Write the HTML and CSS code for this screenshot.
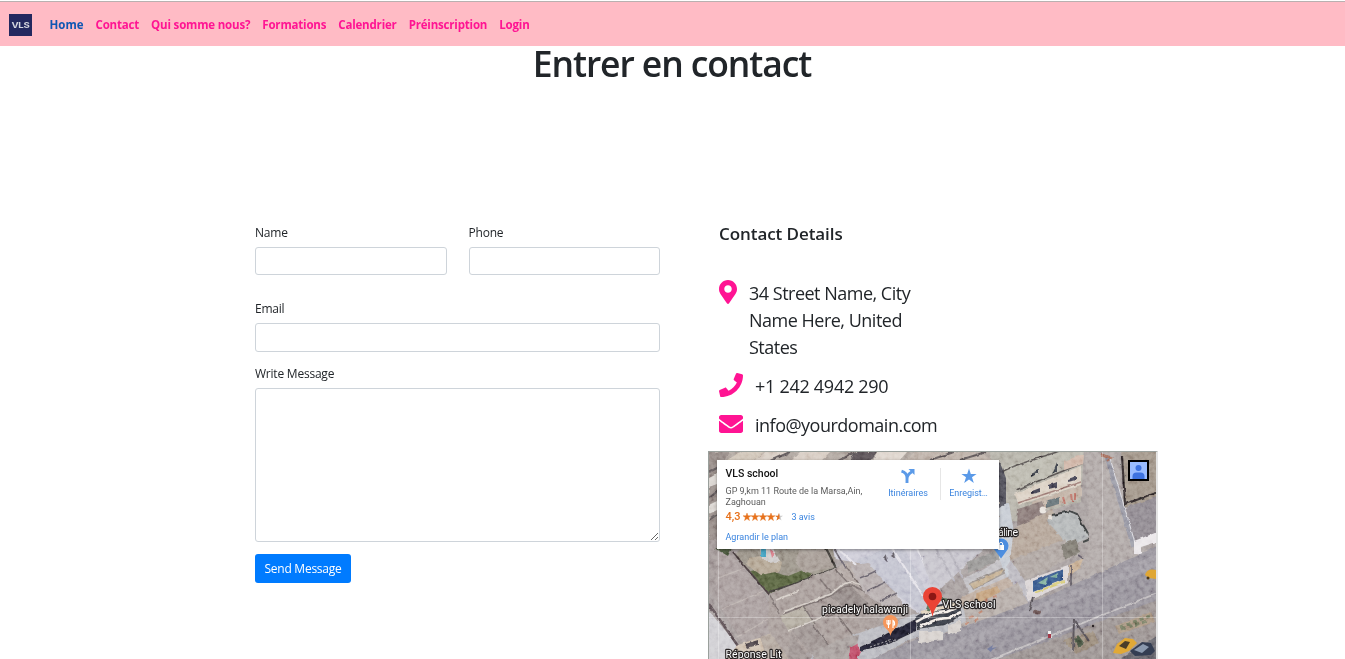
FILE: index.html
```html
<!DOCTYPE html>
<html lang="fr">
<head>
<meta charset="utf-8">
<title>Entrer en contact</title>
<link rel="stylesheet" href="styles.css">
</head>
<body>
<nav class="navbar">
  <a class="brand" href="#"><span class="brand-text">VLS</span></a>
  <a class="nav-link active" href="#">Home</a>
  <a class="nav-link" href="#">Contact</a>
  <a class="nav-link" href="#">Qui somme nous?</a>
  <a class="nav-link" href="#">Formations</a>
  <a class="nav-link" href="#">Calendrier</a>
  <a class="nav-link" href="#">Préinscription</a>
  <a class="nav-link" href="#">Login</a>
</nav>
<h1 class="title"><span>Entrer en contact</span></h1>
<main class="columns">
  <form class="form">
    <div class="row">
      <div class="field"><label for="name">Name</label><input id="name" type="text"></div>
      <div class="field"><label for="phone">Phone</label><input id="phone" type="text"></div>
    </div>
    <div class="field email"><label for="email">Email</label><input id="email" type="text"></div>
    <div class="field message"><label for="message">Write Message</label><textarea id="message"></textarea></div>
    <button class="send" type="button"><span>Send Message</span></button>
  </form>
  <section class="details">
    <h2 class="details-title"><span>Contact Details</span></h2>
    <div class="item address">
      <svg class="icon-pin" viewBox="0 0 384 512"><path d="M172.268 501.67C26.97 291.031 0 269.413 0 192 0 85.961 85.961 0 192 0s192 85.961 192 192c0 77.413-26.97 99.031-172.268 309.67-9.535 13.774-29.93 13.773-39.464 0zM192 272c44.183 0 80-35.817 80-80s-35.817-80-80-80-80 35.817-80 80 35.817 80 80 80z"/></svg>
      <p class="item-text"><span>34 Street Name, City</span><br><span>Name Here, United</span><br><span>States</span></p>
    </div>
    <div class="item phone">
      <svg class="icon" viewBox="0 0 512 512"><path d="M493.4 24.6l-104-24c-11.3-2.6-22.9 3.3-27.5 13.9l-48 112c-4.2 9.8-1.4 21.3 6.9 28l60.6 49.6c-36 76.7-98.9 140.5-177.2 177.2l-49.6-60.6c-6.8-8.3-18.2-11.1-28-6.9l-112 48C3.9 366.5-2 378.1.6 389.4l24 104C27.100 504.200 36.700 512 48 512c256.100 0 464-207.500 464-464 0-11.200-7.700-20.900-18.600-23.400z"/></svg>
      <p class="item-text"><span>+1 242 4942 290</span></p>
    </div>
    <div class="item mail">
      <svg class="icon" viewBox="0 0 512 512"><path d="M502.300 190.800c3.900-3.100 9.700-.2 9.700 4.700V400c0 26.500-21.500 48-48 48H48c-26.500 0-48-21.500-48-48V195.600c0-5 5.700-7.800 9.700-4.700 22.400 17.400 52.100 39.500 154.100 113.600 21.100 15.400 56.700 47.800 92.200 47.600 35.700.3 72-32.800 92.300-47.600 102-74.100 131.600-96.300 154-113.700zM256 320c23.200.4 56.600-29.200 73.400-41.400 132.700-96.300 142.800-104.700 173.400-128.700 5.800-4.500 9.200-11.500 9.200-18.900v-19c0-26.500-21.500-48-48-48H48c-26.500 0-48 21.500-48 48v19c0 7.400 3.400 14.300 9.200 18.900 30.600 23.900 40.700 32.400 173.400 128.700 16.800 12.200 50.200 41.800 73.400 41.400z"/></svg>
      <p class="item-text"><span>info@yourdomain.com</span></p>
    </div>
    <div class="map">
      <svg class="aerial" viewBox="709 452 447 207" width="447" height="207">
        <defs>
          <filter id="grain" x="0" y="0" width="100%" height="100%">
            <feTurbulence type="fractalNoise" baseFrequency="0.2" numOctaves="5" seed="7"/>
            <feColorMatrix values="0.7 0.3 0 0 0  0.7 0.3 0 0 0  0.7 0.3 0 0 0  0 0 0 0 1"/>
            <feComponentTransfer><feFuncR type="linear" slope="2.2" intercept="-0.38"/><feFuncG type="linear" slope="2.2" intercept="-0.4"/><feFuncB type="linear" slope="2.2" intercept="-0.36"/></feComponentTransfer>
          </filter>
          <filter id="rough" x="-5%" y="-5%" width="110%" height="110%">
            <feTurbulence type="fractalNoise" baseFrequency="0.15" numOctaves="2" seed="3" result="n"/>
            <feDisplacementMap in="SourceGraphic" in2="n" scale="3" xChannelSelector="R" yChannelSelector="G"/>
            <feGaussianBlur stdDeviation="0.45"/>
          </filter>
        </defs>
        <rect x="709" y="452" width="447" height="207" fill="#9b9391"/>
        <g filter="url(#rough)">
          <!-- northern rooftops -->
          <path d="M705 448H1000V548H705z" fill="#a59b92"/>
          <path d="M709 452h20l-8 14-4 94h-8z" fill="#877b76"/>
          <path d="M722 463l22-13h24l-20 14z" fill="#c8bcac"/><path d="M752 462l15-11h22l-17 12zM800 452h30l-8 8h-30z" fill="#d0c4b8"/>
          <path d="M855 452h22l-7 9h-20z" fill="#443d40"/><path d="M877 452h30l-8 9h-26z" fill="#d9cfc5"/>
          <path d="M905 460l10-8h60l20 9z" fill="#b4a79c"/>
          <path d="M709 472l12-6M709 498l10-8M709 520l9-6M770 461l20-9M838 461l18-9M930 460l24-8M960 460l26-8" stroke="#4c4444" stroke-width="2"/>
          <path d="M709 478l8-4v10l-8 3zM709 505l8-4v9l-8 4z" fill="#d5d0ca"/>
          <!-- western roofs -->
          <path d="M705 540h26l56 93-40 17-42-66z" fill="#958b89"/>
          <path d="M717 550l18 8 55 73-45 15-28-47z" fill="#9d9290"/>
          <path d="M705 606l33 40-9 16h-24z" fill="#c8c7cb"/>
          <path d="M709 604l29 42" stroke="#493d40" stroke-width="2.500" fill="none"/>
          <path d="M738 645l49-17 15 34h-80z" fill="#c9b9a6"/>
          <path d="M760 637l28-8 14 33h-34z" fill="#a89c91"/>
          <path d="M745 644l13-4v5l-11 3z" fill="#3d3639"/>
          <path d="M718 578l32-12M722 609l46-20M737 637l35-20" stroke="#b0a6a1" stroke-width="1.300"/>
          <!-- garden -->
          <path d="M741 548h92l2 20-66 25-20-23-14-15z" fill="#8c8578"/>
          <path d="M750 571l13-2 25 7 15-6 9 4-9 8-35 12z" fill="#46532f"/>
          <path d="M714 548h18l-4 8z" fill="#334026"/>
          <path d="M748 558l21-3 13 7-2 9-19 4-14-10z" fill="#a89a85"/>
          <path d="M800 549h25l9 18-30 6-9-11z" fill="#9a9087"/>
          <path d="M760 549h13l7 12-10 2-8-5z" fill="#c6c3c1"/><path d="M761 549h5v8h-5z" fill="#2d91b3"/><path d="M770 550l5 4-3 4z" fill="#ce6570"/>
          <path d="M733 552l14 17 22 25 21 36" stroke="#352b2c" stroke-width="1.900" fill="none"/>
          <path d="M769 592l22-7 45-17-12-24" stroke="#2d2b28" stroke-width="2.200" fill="none"/>
          <!-- central roofs -->
          <path d="M769 594l66-26 33-15 15 11 34 35-14 15-43 20-71 25-21-29z" fill="#9c918c"/>
          <path d="M836 568l31-15 16 11 8 12-21 14-22-4z" fill="#a89d97"/>
          <path d="M830 597l10-12q9-5 13 3l15 15-19 9z" fill="#877d79"/>
          <path d="M780 616l25-10 10 18-26 8z" fill="#a7a092"/>
          <path d="M791 631l20 31h-23zM812 622l18 27-17 8-22-27z" fill="#918783"/>
          <path d="M783 614l47-18 14-9 8-2 8 4 21 16 23-10M790 630l36-14 42-13M802 604l13 20M820 579l14 17M835 569l15 16M770 594l9 20M846 566l16 22M813 625l18 24M838 616l17 22" stroke="#6a605d" stroke-width="1.500" fill="none"/>
          <path d="M783 612l48-18 12-10 9-2 10 3 20 15M788 631l37-15M776 600l23-9" stroke="#cdc5bd" stroke-width="1.500" fill="none"/>
          <!-- hall with pale roof -->
          <path d="M833 548h85l27 57-18 12-26-14-19-36-47-8z" fill="#c4c3cf"/>
          <path d="M856 560l32-12h16l32 62-14 4z" fill="#b9bac7"/>
          <path d="M892 548l39 60M917 548l23 50M838 549l18 16" stroke="#e0dee5" stroke-width="2.200"/>
          <path d="M850 566l18-3 9 10 26 29-10 12-28-20z" fill="#aca3a2"/>
          <path d="M833 547l13 22M860 578l16-7M867 591l19-9M880 601l17-8" stroke="#57515a" stroke-width="1.500"/>
          <path d="M883 558l3-4 1 8zM891 555l3-3 1 6z" fill="#4d4850"/>
          <!-- east block -->
          <path d="M918 548h68l-20 17-32 30z" fill="#bdbbc3"/>
          <path d="M935 548l20 34M948 548l15 30" stroke="#aaa8b1" stroke-width="2"/>
          <path d="M963 579l48-25 12 22-49 31z" fill="#b9b7ba"/>
          <path d="M968 562l31-13h9l-2 8-38 16z" fill="#8a8986"/><path d="M969 583l37-17v7l-33 17z" fill="#8b837c"/>
          <path d="M970 584l34-15-3 5-27 15z" fill="#bba585"/>
          <path d="M966 595l42-18 10 17-45 24-18 6-10-12z" fill="#b4a293"/>
          <path d="M977 593l20-7 6 10-15 8-13-4z" fill="#b9946c"/>
          <!-- north-east terraces -->
          <path d="M989 448h95l-3 53-68 21-14-18z" fill="#aaa79b"/>
          <path d="M1000 469l80-29 4 20-68 31z" fill="#b1afa2"/>
          <path d="M1014 494l67-28v19l-62 20z" fill="#d5cabb"/>
          <path d="M1001 472l16-7 52-17 14-3M1016 490l67-27" stroke="#45413e" stroke-width="1.600" fill="none"/>
          <path d="M1064 461l20-7-1 10-19 6z" fill="#c8ab9a"/>
          <path d="M1032 491l8-3v4l-8 2zM1049 485l8-3v5l-8 2zM1068 479l8-3v4l-8 2z" fill="#333141"/>
          <path d="M1031 474l8-4v3l-8 4zM1057 462v9l-5 3z" fill="#272c30"/>
          <path d="M1031 502l51-17v12l-49 16z" fill="#b8a798"/><path d="M1046 501l13-4v7l-13 4z" fill="#596669"/><path d="M1063 497l2 7M1071 494l1 8M1075 493v7" stroke="#b16254" stroke-width="2"/>
          <path d="M1018 503l63-21" stroke="#8f6c63" stroke-width="1.500"/>
          <path d="M1018 509l24-8 6 16-31 9z" fill="#7b6c68"/>
          <path d="M999 460l7 18v31l-7-1z" fill="#40414a"/><path d="M999 508l10-5 9 53-11 22-8-20z" fill="#bec4cc"/>
          <!-- shop -->
          <path d="M1014 528l38-18 18 28-22 12-38 11z" fill="#a9998a"/>
          <path d="M1054 514l20-3 17 26-22 9-22-25z" fill="#a9adad"/>
          <path d="M1052 515l18-4 7 3 14 25-8 3" stroke="#282a29" stroke-width="2" fill="none"/>
          <path d="M1011 560l54-21 8 18-52 24z" fill="#a49b95"/>
          <path d="M1011 560l14 21 5 22-12-8-12-28z" fill="#b1afb6"/>
          <path d="M1025 581l43-16v18l-40 18z" fill="#d6d0d0"/>
          <path d="M1033 581l30-12v11l-30 12z" fill="#28477c"/><path d="M1038 583l10-6-3 8zM1050 577l8-4-1 5z" fill="#72a58f"/><path d="M1034 592l30-12v3l-30 11z" fill="#d0c36b"/>
          <path d="M1069 565l17-8-2 10-16 9z" fill="#bea486"/><path d="M1062 544l14-5 4 13-16 8z" fill="#716d62"/>
          <path d="M1078 555l9 6M1071 565v26M1088 565l-1 14" stroke="#47414b" stroke-width="1.600"/>
          <circle cx="1043" cy="510" r="3.500" fill="#e3ddd6"/><circle cx="1050" cy="518" r="2.200" fill="#ddd5cd"/>
          <!-- side street and plots -->
          <path d="M1085 448h28l26 91 21 30v26l-130 52-2-34 41-20 20-48z" fill="#a49c99"/>
          <path d="M1121 448h39v51l-35 8z" fill="#948879"/>
          <path d="M1126 507l34-11v40l-26 9z" fill="#827c82"/>
          <path d="M1122 456l3 48 34-12" stroke="#211e1d" stroke-width="2.200" fill="none"/>
          <path d="M1107 456l27 91" stroke="#898a96" stroke-width="5"/><path d="M1110 458l25 85" stroke="#d3d2d7" stroke-width="1"/>
          <path d="M1134 541l26-10v10l-19 6 2 8-9-1z" fill="#e7e3e6"/>
          <path d="M1101 454l10 4-4 3" stroke="#985c48" stroke-width="2" fill="none"/>
          <path d="M1142 562l8-7 7 2" stroke="#56474b" stroke-width="2.500" fill="none"/>
          <!-- main road -->
          <path d="M860 664l96-42 90-25 114-52v63l-122 56z" fill="#88848c"/>
          <path d="M905 662l255-109v12L934 662z" fill="#928e95"/>
          <path d="M985 664l175-65v65z" fill="#8f8784"/>
          <path d="M985 662l175-70" stroke="#b8b4b5" stroke-width="1.800"/>
          <path d="M1116 662l44-28v28z" fill="#57575c"/>
          <path d="M943 620l22-10 53-27 10 20-65 24-31 11z" fill="#aaa19b"/>
          <path d="M975 606l13-7 13-5M970 618l16-9M956 628l27-11" stroke="#b4775f" stroke-width="2" stroke-dasharray="4 6" fill="none"/>
          <path d="M1115 626l36-14 4 10-36 12z" fill="#9d8972"/><path d="M1120 627l30-11M1122 629l25-8" stroke="#626b4d" stroke-width="3" stroke-dasharray="4 3"/>
          <path d="M1063 640l30-9 6 12-23 11z" fill="#8b7b69"/><path d="M1078 635l7 9-6 4-5-8z" fill="#34422f"/>
          <path d="M1074 619l-1 32M1074 620l15 21M1033 597l-4 14" stroke="#444145" stroke-width="2"/>
          <ellipse cx="1037" cy="612" rx="4" ry="2.500" fill="#594341"/>
          <!-- café frontage -->
          <path d="M808 662l6-10 42-18 64-21 26-8 17-2 3 18-23 13-32 5-36 19-18 4z" fill="#afb0b6"/>
          <path d="M860 647l56-28v12l-27 13-29 7z" fill="#171820"/>
          <path d="M812 652l35-15 12-2-5 27h-40z" fill="#9b938f"/><path d="M850 648l7-4 4 8-5 10h-7z" fill="#b53c57"/>
          <path d="M915 617l18-11 26-6 3 15-17 10-28 4z" fill="#282a30"/>
          <path d="M916 622q16-10 31-10l12-6M920 627q15-9 29-9l12-6" stroke="#f2ebe5" stroke-width="2.600" fill="none"/>
          <path d="M921 613q20-5 39-9" stroke="#dfd0b8" stroke-width="4" fill="none"/>
          <path d="M927 611l2-6 10-6 8 1" stroke="#486348" stroke-width="3" fill="none"/>
          <path d="M919 631h24v9l-24 3zM948 625l13-6v12l-13 4z" fill="#cfc9c4"/>
          <path d="M870 647l23-8M875 649l22-10" stroke="#93919a" stroke-width="1" stroke-dasharray="2 2"/>
        </g>
        <rect class="noise" x="709" y="452" width="447" height="207" filter="url(#grain)"/>
        <!-- vehicles -->
        <path d="M1113 653l4-9 8-6 8 1 4 4-8 8-8 3z" fill="#e1a937"/><path d="M1119 646l6-5 5 1-4 7z" fill="#4b3d29"/>
        <path d="M1130 651l12-9 9 1 4 8-4 4-16 1z" fill="#343d52"/><path d="M1134 650l9-6 6 3-7 6z" fill="#8b99ae"/>
        <path d="M1145 575q2-7 11-5v9l-7-1z" fill="#e0a735"/><circle cx="1148" cy="578" r="1.500" fill="#493719"/>
        <path d="M1048 631h3v4l1 3h-4z" fill="#eee"/><path d="M1048 634h3v4h-3z" fill="#a23746"/><circle cx="1093" cy="626" r="1.200" fill="#282224"/>
        <path class="tile" d="M718.500 548V659M910.500 548V659M1102.500 452V659M709 617.500H1156"/>
        <path d="M987 649l6-4-1 3 5-1-5 3-1 2z" fill="#777fa2"/>
        <!-- place markers -->
        <path d="M1001 558.500l-5.500-7.500a7.500 7.500 0 1 1 11 0z" fill="#4d8edf"/><path d="M998 545h6v5h-6z" fill="#fff"/><path d="M999.300 545v-1a1.700 1.700 0 0 1 3.400 0v1" fill="none" stroke="#fff"/>
        <path d="M890.500 636q-1-5-5-8a7.500 7.500 0 1 1 10 0q-4 3-5 8z" fill="#f5975c"/>
        <path d="M887 620v3.500q1.500 1.500 3 0V620M888.500 620v8M893 628v-7.500q2 1 1.500 4.500H893" fill="none" stroke="#fff" stroke-width="1.100"/>
        <path d="M932.500 617q-1-7-5.500-12.500c-2-2.500-4-5-4-8a9.500 9.500 0 0 1 19 0c0 3-2 5.500-4 8Q933.500 610 932.500 617z" fill="#ea4335"/><circle cx="932.500" cy="596.500" r="3.800" fill="#8c1714"/>
        <g class="place">
          <text x="822" y="613" textLength="86">picadely halawanji</text>
          <text x="942.500" y="607.500" textLength="53">VLS school</text>
          <text x="725.500" y="657.500" textLength="56">Réponse Lit</text>
          <text x="998" y="535.500" textLength="20">áline</text>
        </g>
      </svg>
      <div class="card">
        <div class="place-info">
          <h3 class="place-name">VLS school</h3>
          <p class="place-address">GP 9,km 11 Route de la Marsa,Ain,<br>Zaghouan</p>
          <p class="rating"><b>4,3</b>
            <svg width="40" height="8" viewBox="0 0 40 8"><defs><path id="star" d="M4 0l1 2.800H8L5.600 4.600l.9 3L4 5.800l-2.500 1.800.9-3L0 2.800h3z"/><clipPath id="half"><path d="M0 0h4.500v8H0z"/></clipPath></defs><g fill="#e7711b" stroke="#e7711b" stroke-width=".4"><use href="#star"/><use href="#star" x="8"/><use href="#star" x="16"/><use href="#star" x="24"/></g><use href="#star" x="32" fill="#ccc"/><g transform="translate(32 0)"><use href="#star" fill="#e7711b" clip-path="url(#half)"/></g></svg>
            <a href="#">3 avis</a></p>
          <a class="enlarge" href="#">Agrandir le plan</a>
        </div>
        <div class="action directions">
          <svg width="16" height="16" viewBox="0 0 16 16"><path d="M1.500 3.200Q7 4.800 7 10v5M7 11q0-4.500 5-7.200" fill="none" stroke="#5b9ae8" stroke-width="2.900"/><path d="M8.500 1H14.500v6z" fill="#5b9ae8"/></svg>
          <span>Itinéraires</span>
        </div>
        <div class="action save">
          <svg width="16" height="16" viewBox="0 0 16 16"><path d="M8 .5l1.800 5.400h5.800L11 9.300l1.800 5.700L8 11.600 3.200 15 5 9.300.4 5.900h5.800z" fill="#5b9ae8"/></svg>
          <span>Enregist…</span>
        </div>
      </div>
      <div class="avatar"><svg width="17" height="17" viewBox="0 0 17 17"><circle cx="8.500" cy="6" r="3" fill="#3f73e0"/><path d="M2.500 17v-2.500q0-4 4-4h4q4 0 4 4V17z" fill="#3f73e0"/></svg></div>
    </div>
  </section>
</main>
</body>
</html>
```
FILE: styles.css
```css
* { box-sizing: border-box; }
body {
  margin: 0;
  height: 659px;
  overflow: hidden;
  background: #fff;
  color: #212529;
  font-family: "Open Sans", "Noto Sans", sans-serif;
  font-size: 12px;
}
p, h1, h2, h3 { margin: 0; }
a { text-decoration: none; }

.navbar {
  display: flex;
  align-items: center;
  gap: 12px;
  height: 45px;
  margin-top: 1px;
  padding: 2px 9px 0;
  border-top: 1px solid #b9b0b0;
  background: #ffbbc5;
}
.brand {
  display: flex;
  align-items: center;
  justify-content: center;
  width: 23px;
  height: 22px;
  margin-right: 5.5px;
  background: #23285f;
}
.brand-text { color: #d5d6df; font: bold 8px/10px Inter, sans-serif; transform: scaleX(1.2); letter-spacing: -0.3px; }
.nav-link { color: #ff1493; font-size: 11.5px; font-weight: 700; line-height: 18px; white-space: nowrap; letter-spacing: -0.18px; }
.nav-link.active { color: #0f56b3; letter-spacing: 0; }

.title { height: 36px; padding-right: 1px; font-size: 35.5px; font-weight: 600; line-height: 34px; text-align: center; white-space: nowrap; letter-spacing: -1.1px; }

.columns { display: flex; padding: 141px 0 0 255px; }
.form { width: 405px; }
.row { display: flex; gap: 22px; }
.row .field { flex: 1; }
.field label { display: block; height: 24px; line-height: 20px; letter-spacing: -0.22px; }
.field input, .field textarea {
  display: block;
  width: 100%;
  height: 28px;
  border: 1px solid #ced4da;
  border-radius: 3px;
  background: #fff;
}
.email { margin-top: 24px; }
.email input { height: 29px; }
.message { margin-top: 12px; }
.field textarea { height: 154px; }
.send { display: block; width: 96px; height: 29px; margin-top: 12px; padding: 0; border: 0; border-radius: 3px; background: #007bff; color: #fff; font: 12px/28px "Open Sans", sans-serif; letter-spacing: -0.25px; }

.details { width: 450px; margin-left: 48px; }
.details-title { height: 57px; padding-left: 11px; font-size: 17px; font-weight: 600; line-height: 22px; letter-spacing: -0.07px; }
.item { display: flex; padding-left: 11px; white-space: nowrap; }
.item svg { fill: #ff1493; flex: none; }
.item-text { font-size: 18px; line-height: 27px; letter-spacing: -0.5px; }
.icon-pin { width: 18px; height: 24px; }
.icon { width: 24px; height: 24px; }
.address { gap: 12px; height: 93px; }
.phone, .mail { gap: 12px; height: 39px; }
.phone .item-text { letter-spacing: -0.28px; }

.map { position: relative; width: 450px; height: 208px; border: 1px solid #9aa09c; border-right: 2px solid #e4e4e4; border-bottom: 0; overflow: hidden; }
.aerial { display: block; }
.noise { mix-blend-mode: soft-light; opacity: .6; }
.tile { stroke: #fff; stroke-opacity: .3; fill: none; }
.place { fill: #fff; stroke: #292525; stroke-width: 2.4px; paint-order: stroke; stroke-linejoin: round; font: 10.5px Roboto, sans-serif; }

.card { position: absolute; top: 8px; left: 8px; display: flex; width: 282px; height: 89px; background: #fff; box-shadow: 0 1px 3px rgba(0,0,0,.4); font-family: Roboto, sans-serif; font-size: 9px; color: #5b5b5b; }
.card a, .action { color: #3a84df; }
.place-info { width: 159px; padding: 7px 0 0 8.5px; white-space: nowrap; }
.place-name { height: 19px; color: #111; font-size: 10.5px; font-weight: 500; line-height: 14px; }
.place-address { height: 25px; line-height: 11px; }
.rating { display: flex; align-items: center; height: 12px; line-height: 12px; }
.rating b { width: 17px; color: #e7711b; font-size: 11px; font-weight: 500; }
.rating a { margin-left: 9px; }
.enlarge { display: block; margin-top: 8px; line-height: 12px; }
.action { display: flex; flex-direction: column; align-items: center; gap: 3px; width: 64px; height: 32px; margin-top: 8px; line-height: 12px; }
.save { width: 56px; border-left: 1px solid #e6e6e6; }
.avatar { position: absolute; top: 8px; right: 7px; width: 21px; height: 21px; border: 2px solid #000; background: #9abcff; }
.avatar svg { display: block; }
```
